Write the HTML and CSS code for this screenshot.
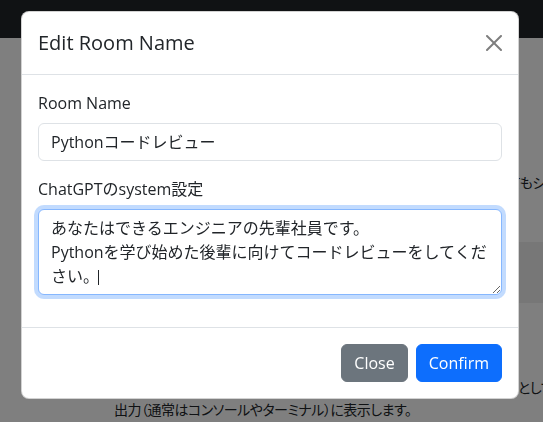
FILE: index.html
```html
<!DOCTYPE html>
<html lang="ja">
<head>
<meta charset="utf-8">
<title>Edit Room Name</title>
<link rel="stylesheet" href="styles.css">
</head>
<body>
<nav class="navbar"></nav>
<main class="page">
  <p class="bg-line line-a">てもシステム全体の動作を確認できます。</p>
  <div class="bg-block"></div>
  <p class="bg-line line-b">として標準出力に渡します。</p>
  <p class="bg-line line-c">出力（通常はコンソールやターミナル）に表示します。</p>
</main>
<div class="backdrop"></div>
<div class="modal">
  <div class="modal-header">
    <h5 class="modal-title">Edit Room Name</h5>
    <button class="btn-close" type="button" aria-label="Close">
      <svg width="16" height="16" viewBox="0 0 16 16"><path d="M.293.293a1 1 0 0 1 1.414 0L8 6.586 14.293.293a1 1 0 1 1 1.414 1.414L9.414 8l6.293 6.293a1 1 0 0 1-1.414 1.414L8 9.414l-6.293 6.293a1 1 0 0 1-1.414-1.414L6.586 8 .293 1.707a1 1 0 0 1 0-1.414z"/></svg>
    </button>
  </div>
  <div class="modal-body">
    <div class="field">
      <label class="form-label" for="room">Room Name</label>
      <input class="form-control" id="room" type="text" value="Pythonコードレビュー">
    </div>
    <div class="field">
      <label class="form-label" for="sys">ChatGPTのsystem設定</label>
      <div class="textarea-wrap">
        <textarea class="form-control is-focused" id="sys" rows="3">あなたはできるエンジニアの先輩社員です。
Pythonを学び始めた後輩に向けてコードレビューをしてください。</textarea>
        <span class="caret"></span>
      </div>
    </div>
  </div>
  <div class="modal-footer">
    <button class="btn btn-secondary" type="button">Close</button>
    <button class="btn btn-primary" type="button">Confirm</button>
  </div>
</div>
</body>
</html>
```

FILE: styles.css
```css
html, body {
  margin: 0;
  padding: 0;
}

body {
  width: 543px;
  height: 422px;
  overflow: hidden;
  background: #ffffff;
  font-family: "Open Sans", "Noto Sans CJK JP", sans-serif;
  color: #212529;
}

.navbar {
  height: 38px;
  background: #212529;
}

.page {
  padding: 133px 0 0 114px;
}

.bg-line {
  margin: 0;
  font-family: "Noto Sans CJK JP", sans-serif;
  font-size: 14px;
  line-height: 22px;
  letter-spacing: -0.5px;
  font-feature-settings: "palt";
  white-space: nowrap;
  color: #212529;
}

.line-a {
  text-indent: 394px;
}

.bg-block {
  margin: 49px 0 0 0;
  height: 61px;
  background: #eeeeee;
}

.line-b {
  margin-top: 73px;
  text-indent: 404px;
}

.backdrop {
  position: fixed;
  inset: 0;
  background: rgba(0, 0, 0, 0.5);
}

.modal {
  position: absolute;
  top: 11px;
  left: 21px;
  width: 498px;
  box-sizing: border-box;
  background: #ffffff;
  border: 1px solid rgba(0, 0, 0, 0.175);
  border-radius: 8px;
}

.modal-header {
  display: flex;
  align-items: center;
  padding: 16px;
  border-bottom: 1px solid #dee2e6;
}

.modal-title {
  margin: 0;
  font-size: 20px;
  font-weight: 500;
  line-height: 30px;
  color: #212529;
}

.btn-close {
  display: flex;
  align-items: center;
  justify-content: center;
  box-sizing: border-box;
  width: 32px;
  height: 32px;
  padding: 8px;
  margin: -8px -8px -8px auto;
  border: 0;
  background: transparent;
  opacity: 0.5;
}

.btn-close svg {
  display: block;
  fill: #000000;
}

.modal-body {
  padding: 16px;
}

.field {
  margin-bottom: 16px;
}

.form-label {
  display: block;
  margin-bottom: 8px;
  font-size: 16px;
  line-height: 24px;
}

.form-control {
  display: block;
  width: 100%;
  box-sizing: border-box;
  padding: 6px 12px;
  margin: 0;
  font-family: inherit;
  font-size: 16px;
  line-height: 24px;
  color: #212529;
  background: #ffffff;
  border: 1px solid #dee2e6;
  border-radius: 6px;
  outline: none;
}

textarea.form-control {
  height: 86px;
  resize: vertical;
}

.form-control.is-focused {
  border-color: #86b7fe;
  box-shadow: 0 0 0 4px rgba(13, 110, 253, 0.25);
}

.textarea-wrap {
  position: relative;
}

.caret {
  position: absolute;
  left: 60px;
  top: 61px;
  width: 1px;
  height: 15px;
  background: #212529;
}

.modal-footer {
  display: flex;
  justify-content: flex-end;
  align-items: center;
  padding: 12px;
  border-top: 1px solid #dee2e6;
}

.btn {
  margin: 4px;
  padding: 6px 12px;
  font-family: inherit;
  font-size: 16px;
  line-height: 24px;
  color: #ffffff;
  border: 1px solid transparent;
  border-radius: 6px;
}

.btn-secondary {
  background: #6c757d;
  border-color: #6c757d;
}

.btn-primary {
  background: #0d6efd;
  border-color: #0d6efd;
}
```
